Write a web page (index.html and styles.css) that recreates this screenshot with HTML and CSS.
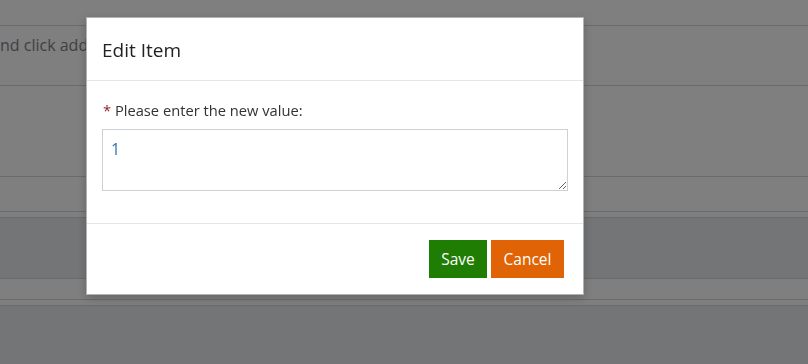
FILE: index.html
```html
<!DOCTYPE html>
<html lang="en">
<head>
<meta charset="utf-8">
<title>Edit Item</title>
<link rel="stylesheet" href="styles.css">
</head>
<body>
<div class="page">
  <div class="row r1"></div>
  <div class="row r2"><span class="hint">nd click add</span></div>
  <div class="row r3"></div>
  <div class="row r4"></div>
  <div class="row r5"></div>
  <div class="row band"></div>
  <div class="row r7"></div>
  <div class="row r8"></div>
  <div class="rest"></div>
</div>
<div class="overlay"></div>
<div class="modal">
  <div class="modal-header">
    <h4 class="modal-title">Edit Item</h4>
  </div>
  <div class="modal-body">
    <label class="field-label" for="val"><span class="req">*</span> Please enter the new value:</label>
    <textarea id="val" class="field">1</textarea>
  </div>
  <div class="modal-footer">
    <button class="btn btn-save">Save</button>
    <button class="btn btn-cancel">Cancel</button>
  </div>
</div>
</body>
</html>
```
FILE: styles.css
```css
html, body {
  margin: 0;
  padding: 0;
  height: 100%;
  overflow: hidden;
  font-family: "Open Sans", "Noto Sans", "Liberation Sans", sans-serif;
}
.page {
  display: flex;
  flex-direction: column;
  height: 100%;
  background: #ffffff;
}
.row {
  border-bottom: 1px solid #d6d6d6;
  flex: none;
}
.r1 { height: 25px; }
.r2 {
  height: 60px;
  box-sizing: border-box;
  padding-top: 8px;
}
.hint {
  font-size: 16px;
  line-height: 22px;
  color: #7b828c;
}
.r3 { height: 90px; }
.r4 { height: 34px; }
.r5 { height: 5px; }
.band { height: 60px; background: #e8eaee; }
.r7 { height: 20px; }
.r8 { height: 5px; }
.rest { flex: 1; background: #e8eaee; }
.overlay {
  position: fixed;
  inset: 0;
  background: rgba(0, 0, 0, 0.5);
}
.modal {
  position: absolute;
  left: 86px;
  top: 17px;
  width: 496px;
  background: #fff;
  border: 1px solid rgba(0, 0, 0, 0.3);
  box-shadow: 0 3px 9px rgba(0, 0, 0, 0.2);
}
.modal-header {
  height: 63px;
  box-sizing: border-box;
  padding: 0 15px;
  display: flex;
  align-items: center;
  border-bottom: 1px solid #e5e5e5;
}
.modal-title {
  margin: 0;
  font-size: 19px;
  font-weight: 400;
  color: #222;
  padding-top: 1px;
}
.modal-body {
  padding: 19px 15px 32px 15px;
  display: flex;
  flex-direction: column;
  gap: 9px;
}
.field-label {
  font-size: 14.7px;
  color: #333;
  padding-left: 1px;
  line-height: 20px;
}
.req { color: #8b1e1e; }
.field {
  box-sizing: border-box;
  width: 466px;
  height: 62px;
  border: 1px solid #cdd1d6;
  border-radius: 0;
  padding: 8px 8px;
  font-family: inherit;
  font-size: 16px;
  color: #2f72b0;
  resize: vertical;
  outline: none;
}
.modal-footer {
  border-top: 1px solid #e5e5e5;
  padding: 16px 19px 16px 15px;
  display: flex;
  justify-content: flex-end;
  gap: 4px;
}
.btn {
  height: 38px;
  border: none;
  color: #fff;
  font-family: inherit;
  font-size: 15.5px;
  padding: 0;
  cursor: pointer;
}
.btn-save { background: #1e7d02; width: 58px; }
.btn-cancel { background: #e06405; width: 73px; }
```
